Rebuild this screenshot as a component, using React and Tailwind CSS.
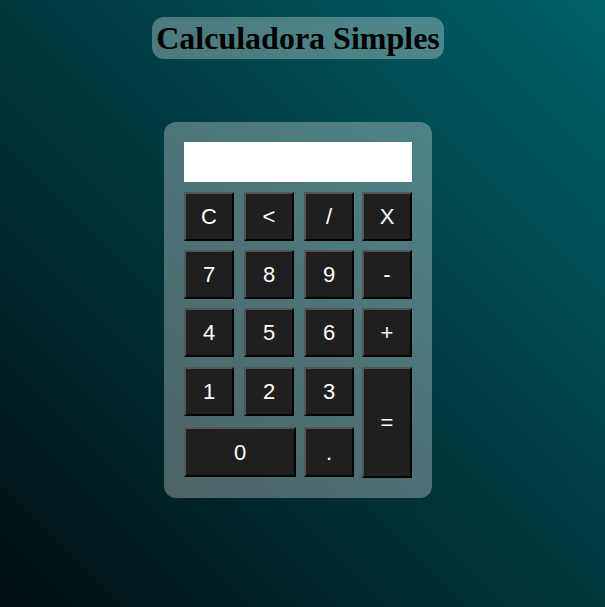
import React from "react";

const btn =
  "flex items-center justify-center bg-[#1f1f1f] text-white text-[22px] border-2 border-t-[#555] border-l-[#555] border-b-black border-r-black";

function B({ children, className = "" }) {
  return <div className={`${btn} ${className}`}>{children}</div>;
}

export default function App() {
  return (
    <div
      className="w-[605px] h-[607px] bg-[linear-gradient(to_top_right,#000f11,#00616a)] overflow-hidden"
      style={{ fontFamily: '"Liberation Sans", Arial, sans-serif' }}
    >
      <div className="w-[596px] flex flex-col items-center pt-[17px]">
        <div
          className="bg-white/30 rounded-[12px] px-[4px] h-[42px] flex items-center text-black font-bold text-[32px] leading-none"
          style={{ fontFamily: '"Liberation Serif", "Times New Roman", serif' }}
        >
          Calculadora Simples
        </div>
        <div className="mt-[63px] bg-white/30 rounded-[12px] px-[20px] pt-[20px] pb-[21px] w-[268px]">
          <div className="bg-white h-[40px] w-[228px]" />
          <div className="mt-[10px] grid grid-cols-[60px_60px_58px_50px] grid-rows-[58px_58px_59px_60px_50px]">
            <B className="w-[50px] h-[49px]">C</B>
            <B className="w-[50px] h-[49px]">&lt;</B>
            <B className="w-[50px] h-[49px]">/</B>
            <B className="w-[50px] h-[49px]">X</B>
            <B className="w-[50px] h-[49px]">7</B>
            <B className="w-[50px] h-[49px]">8</B>
            <B className="w-[50px] h-[49px]">9</B>
            <B className="w-[50px] h-[49px]">-</B>
            <B className="w-[50px] h-[49px]">4</B>
            <B className="w-[50px] h-[49px]">5</B>
            <B className="w-[50px] h-[49px]">6</B>
            <B className="w-[50px] h-[49px]">+</B>
            <B className="w-[50px] h-[49px]">1</B>
            <B className="w-[50px] h-[49px]">2</B>
            <B className="w-[50px] h-[49px]">3</B>
            <B className="w-[50px] h-[111px] row-span-2">=</B>
            <B className="w-[112px] h-[50px] col-span-2">0</B>
            <B className="w-[50px] h-[50px]">.</B>
          </div>
        </div>
      </div>
    </div>
  );
}
